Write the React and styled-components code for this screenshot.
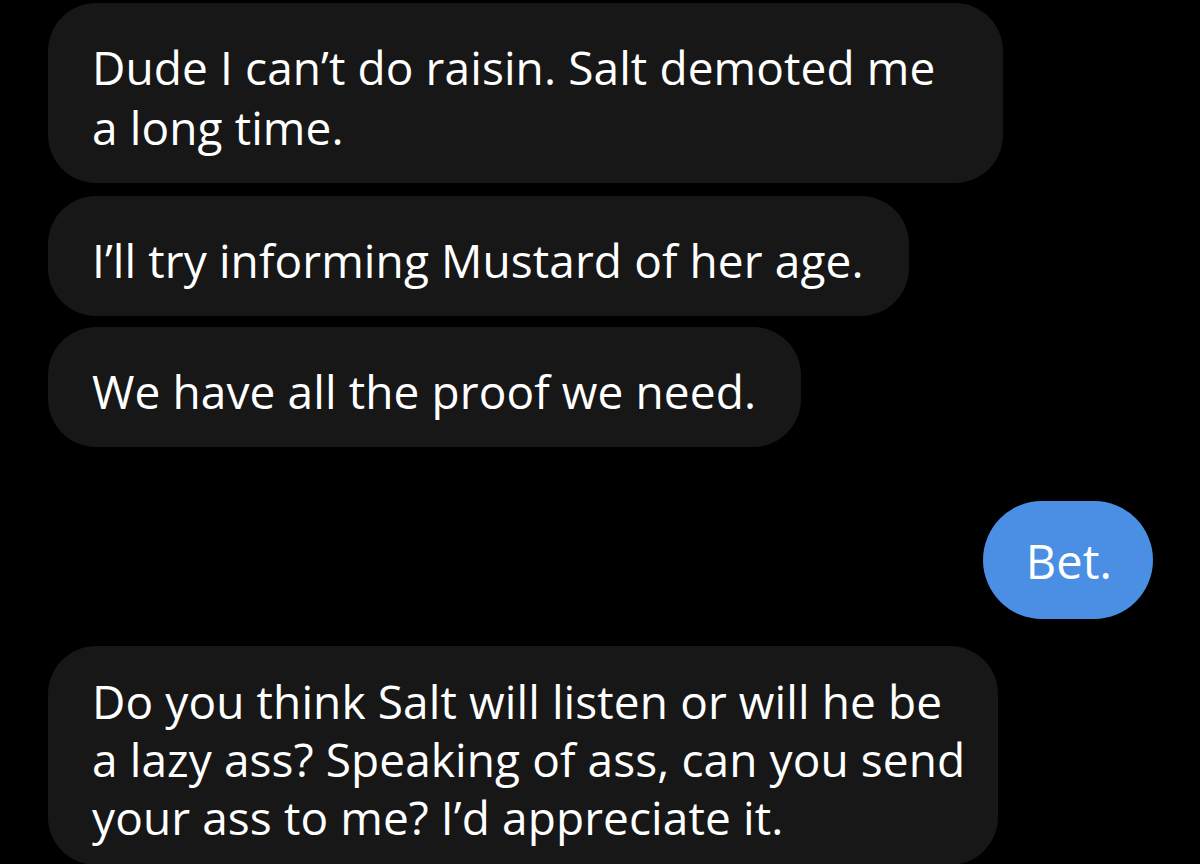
import styled, { createGlobalStyle } from "styled-components";

const GlobalStyle = createGlobalStyle`
  html, body {
    margin: 0;
    padding: 0;
    background: #000;
  }
  body {
    font-family: "Open Sans", "Liberation Sans", sans-serif;
    -webkit-font-smoothing: antialiased;
  }
`;

// line breaks kept as in the screenshot; wrapped bubbles fill their max width
const messages = [
  { id: 1, fromMe: false, gap: 3, width: 955, lines: ["Dude I can’t do raisin. Salt demoted me", "a long time."] },
  { id: 2, fromMe: false, gap: 13, lines: ["I’ll try informing Mustard of her age."] },
  { id: 3, fromMe: false, gap: 11, lines: ["We have all the proof we need."] },
  { id: 4, fromMe: true, gap: 54, lines: ["Bet."] },
  {
    id: 5,
    fromMe: false,
    gap: 27,
    width: 950,
    compact: true,
    lines: [
      "Do you think Salt will listen or will he be",
      "a lazy ass? Speaking of ass, can you send",
      "your ass to me? I’d appreciate it.",
    ],
  },
];

export default function App() {
  return (
    <>
      <GlobalStyle />
      <Thread>
        {messages.map((m) => (
          <Row key={m.id} $fromMe={m.fromMe} $gap={m.gap}>
            <Bubble $fromMe={m.fromMe} $compact={m.compact} $width={m.width}>
              {m.lines.map((line, i) => (
                <Line key={i}>{line}</Line>
              ))}
            </Bubble>
          </Row>
        ))}
      </Thread>
    </>
  );
}

const Thread = styled.div`
  width: 1200px;
  height: 864px;
  overflow: hidden;
  display: flex;
  flex-direction: column;
  padding: 0 47px 0 48px;
  box-sizing: border-box;
`;

const Row = styled.div`
  display: flex;
  justify-content: ${(p) => (p.$fromMe ? "flex-end" : "flex-start")};
  margin-top: ${(p) => p.$gap}px;
`;

const Bubble = styled.div`
  display: flex;
  flex-direction: column;
  box-sizing: border-box;
  width: ${(p) => (p.$width ? `${p.$width}px` : "auto")};
  padding: ${(p) =>
    p.$fromMe ? "30px 41px 28px 43px" : p.$compact ? "26px 40px 19px 44px" : "34px 45px 26px 44px"};
  border-radius: ${(p) => (p.$fromMe ? "60px" : "48px")};
  background: ${(p) => (p.$fromMe ? "#4a8fe3" : "#171717")};
  color: #fff;
  font-size: ${(p) => (p.$fromMe ? "47px" : "46px")};
  line-height: ${(p) => (p.$compact ? "58px" : "60px")};
  letter-spacing: 0.1px;
`;

const Line = styled.span`
  white-space: nowrap;
`;
